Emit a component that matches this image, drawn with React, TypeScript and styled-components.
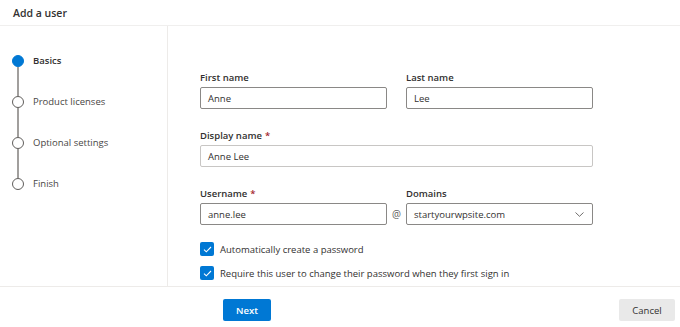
import styled, { createGlobalStyle } from "styled-components";

const GlobalStyle = createGlobalStyle`
  html, body {
    margin: 0;
    padding: 0;
    background: #fff;
  }
  body {
    font-family: "Open Sans", "Noto Sans", sans-serif;
    color: #323130;
  }
`;

const steps = ["Basics", "Product licenses", "Optional settings", "Finish"];

const Page = styled.div`
  width: 680px;
  height: 327px;
  display: flex;
  flex-direction: column;
  overflow: hidden;
`;

const Header = styled.header`
  height: 25px;
  flex: none;
  display: flex;
  align-items: center;
  padding-left: 13px;
  border-bottom: 1px solid #f0efee;
  font-size: 10.5px;
  font-weight: 600;
`;

const Body = styled.div`
  display: flex;
  height: 260px;
  flex: none;
  border-bottom: 1px solid #edebe9;
`;

const Sidebar = styled.nav`
  width: 168px;
  flex: none;
  border-right: 1px solid #edebe9;
  padding: 29px 0 0 12px;
  box-sizing: border-box;
`;

const Step = styled.div`
  display: grid;
  grid-template-columns: 12px 1fr;
  column-gap: 9px;
`;

const Marker = styled.div`
  display: flex;
  flex-direction: column;
  align-items: center;
`;

const Dot = styled.span<{ $active?: boolean }>`
  width: 12px;
  height: 12px;
  box-sizing: border-box;
  border-radius: 50%;
  border: 1px solid ${(p) => (p.$active ? "#0078d4" : "#605e5c")};
  background: ${(p) => (p.$active ? "#0078d4" : "#fff")};
`;

const Connector = styled.span`
  width: 2px;
  height: 29px;
  background: #a19f9d;
`;

const StepLabel = styled.span<{ $active?: boolean }>`
  font-size: 9.5px;
  line-height: 12px;
  font-weight: ${(p) => (p.$active ? 600 : 400)};
  color: ${(p) => (p.$active ? "#323130" : "#484644")};
`;

const Main = styled.main`
  flex: 1;
  padding: 45px 0 0 32px;
`;

const FormGrid = styled.div`
  display: grid;
  grid-template-columns: 187px 19px 187px;
  row-gap: 20px;
`;

const Field = styled.div<{ $wide?: boolean }>`
  display: flex;
  flex-direction: column;
  grid-column: ${(p) => (p.$wide ? "1 / 4" : "auto")};
`;

const Label = styled.label`
  font-size: 9.5px;
  font-weight: 600;
  line-height: 14px;
  margin-bottom: 2px;
`;

const Required = styled.span`
  color: #a4262c;
  margin-left: 3px;
`;

const Input = styled.div<{ $light?: boolean }>`
  height: 22px;
  box-sizing: border-box;
  border: 1px solid ${(p) => (p.$light ? "#c8c6c4" : "#8a8886")};
  border-radius: 2px;
  display: flex;
  align-items: center;
  justify-content: space-between;
  padding: 0 8px 0 7px;
  font-size: 9.5px;
  color: #323130;
`;

const At = styled.span`
  align-self: end;
  height: 22px;
  display: flex;
  align-items: center;
  justify-content: center;
  font-size: 10px;
  color: #605e5c;
`;

const Checks = styled.div`
  display: flex;
  flex-direction: column;
  gap: 10px;
  margin-top: 17px;
`;

const CheckRow = styled.div`
  display: flex;
  align-items: center;
  gap: 6px;
  font-size: 9.5px;
  color: #323130;
`;

const Box = styled.span`
  width: 14px;
  height: 14px;
  border-radius: 2px;
  background: #0078d4;
  display: flex;
  align-items: center;
  justify-content: center;
`;

const Footer = styled.footer`
  flex: 1;
  display: flex;
  justify-content: space-between;
  align-items: flex-start;
  padding: 12px 5px 0 223px;
`;

const Button = styled.button<{ $primary?: boolean }>`
  height: 22px;
  padding: 0;
  width: ${(p) => (p.$primary ? "48px" : "56px")};
  border: 0;
  border-radius: 2px;
  font-family: inherit;
  font-size: 9.5px;
  font-weight: ${(p) => (p.$primary ? 600 : 400)};
  background: ${(p) => (p.$primary ? "#0078d4" : "#e9e9e9")};
  color: ${(p) => (p.$primary ? "#fff" : "#323130")};
  cursor: pointer;
`;

const Check = () => (
  <svg width="9" height="7" viewBox="0 0 9 7">
    <path d="M1 3.6L3.3 5.8L8 1" fill="none" stroke="#fff" strokeWidth="1.1" />
  </svg>
);

const Chevron = () => (
  <svg width="9" height="5" viewBox="0 0 9 5">
    <path d="M0.5 0.5L4.5 4.3L8.5 0.5" fill="none" stroke="#605e5c" strokeWidth="0.9" />
  </svg>
);

export default function App() {
  return (
    <Page>
      <GlobalStyle />
      <Header>Add a user</Header>
      <Body>
        <Sidebar>
          {steps.map((s, i) => (
            <Step key={s}>
              <Marker>
                <Dot $active={i === 0} />
                {i < steps.length - 1 && <Connector />}
              </Marker>
              <StepLabel $active={i === 0}>{s}</StepLabel>
            </Step>
          ))}
        </Sidebar>
        <Main>
          <FormGrid>
            <Field>
              <Label>First name</Label>
              <Input>Anne</Input>
            </Field>
            <span />
            <Field>
              <Label>Last name</Label>
              <Input>Lee</Input>
            </Field>
            <Field $wide>
              <Label>
                Display name<Required>*</Required>
              </Label>
              <Input $light>Anne Lee</Input>
            </Field>
            <Field>
              <Label>
                Username<Required>*</Required>
              </Label>
              <Input>anne.lee</Input>
            </Field>
            <At>@</At>
            <Field>
              <Label>Domains</Label>
              <Input>
                startyourwpsite.com
                <Chevron />
              </Input>
            </Field>
          </FormGrid>
          <Checks>
            <CheckRow>
              <Box>
                <Check />
              </Box>
              Automatically create a password
            </CheckRow>
            <CheckRow>
              <Box>
                <Check />
              </Box>
              Require this user to change their password when they first sign in
            </CheckRow>
          </Checks>
        </Main>
      </Body>
      <Footer>
        <Button $primary>Next</Button>
        <Button>Cancel</Button>
      </Footer>
    </Page>
  );
}
